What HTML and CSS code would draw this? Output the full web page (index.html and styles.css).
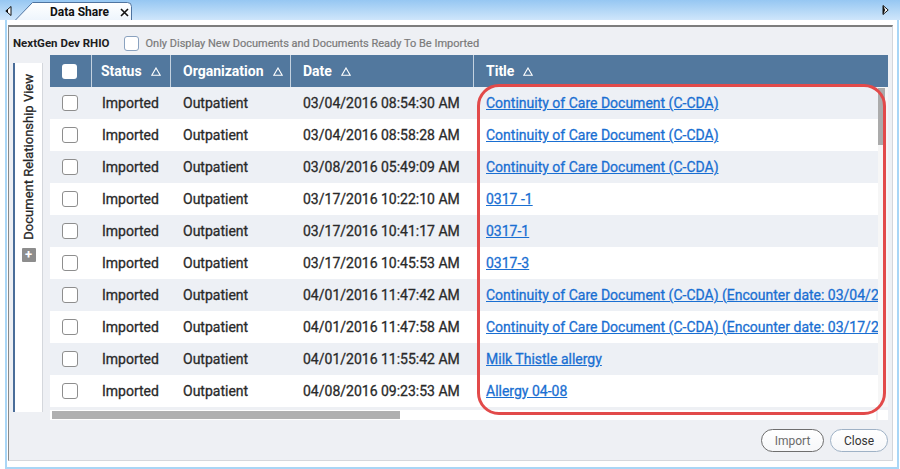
FILE: index.html
```html
<!DOCTYPE html>
<html>
<head>
<meta charset="utf-8">
<link rel="stylesheet" href="styles.css">
</head>
<body>
<div class="tabbar">
  <div class="nav nav-left">
    <svg width="7" height="10" viewBox="0 0 7 10"><polygon points="6,0.5 6,9.5 0.8,5" fill="#fff" stroke="#111" stroke-width="1"/><polygon points="3,3.2 3,6.8 0.8,5" fill="#111"/></svg>
  </div>
  <div class="tab">
    <svg class="tab-shape" width="117" height="20" viewBox="0 0 117 20">
      <defs><linearGradient id="tg" x1="0" y1="0" x2="0" y2="1"><stop offset="0" stop-color="#ffffff"/><stop offset="1" stop-color="#eef5fc"/></linearGradient></defs>
      <path d="M0.5,20 L17.5,2.5 L112.5,2.5 Q116.5,2.5 116.5,6.5 L116.5,20" fill="url(#tg)" stroke="#4f74a0" stroke-width="1"/>
    </svg>
    <span class="tab-title">Data Share</span>
    <svg class="tab-close" width="9" height="9" viewBox="0 0 9 9"><path d="M1,1 L8,8 M8,1 L1,8" stroke="#111" stroke-width="1.6"/></svg>
  </div>
  <div class="tab-fill"></div>
  <div class="nav nav-right">
    <svg width="7" height="10" viewBox="0 0 7 10"><polygon points="1,0.5 1,9.5 6.2,5" fill="#fff" stroke="#111" stroke-width="1"/><polygon points="1,0.5 1,9.5 3.2,5" fill="#111"/></svg>
  </div>
</div>

<div class="frame">
  <div class="panel">
    <div class="filter">
      <span class="source">NextGen Dev RHIO</span>
      <span class="filter-cb"></span>
      <span class="filter-label">Only Display New Documents and Documents Ready To Be Imported</span>
    </div>

    <div class="main">
      <div class="side">
        <span class="side-text">Document Relationship View</span>
        <span class="side-plus">+</span>
      </div>

      <div class="grid">
        <div class="ghead">
          <div class="hcell hcheck"><span class="hcb"></span></div>
          <div class="hcell hstatus">Status<svg class="sort" width="10" height="9" viewBox="0 0 10 9"><path d="M5,1 L9.2,8.3 L0.8,8.3 Z" fill="none" stroke="#fff" stroke-width="1.1"/></svg></div>
          <div class="hcell">Organization<svg class="sort" width="10" height="9" viewBox="0 0 10 9"><path d="M5,1 L9.2,8.3 L0.8,8.3 Z" fill="none" stroke="#fff" stroke-width="1.1"/></svg></div>
          <div class="hcell">Date<svg class="sort" width="10" height="9" viewBox="0 0 10 9"><path d="M5,1 L9.2,8.3 L0.8,8.3 Z" fill="none" stroke="#fff" stroke-width="1.1"/></svg></div>
          <div class="hcell">Title<svg class="sort" width="10" height="9" viewBox="0 0 10 9"><path d="M5,1 L9.2,8.3 L0.8,8.3 Z" fill="none" stroke="#fff" stroke-width="1.1"/></svg></div>
        </div>

        <div class="gbody">
          <div class="rows">
            <div class="row"><div class="c ccheck"><span class="cb"></span></div><div class="c cstatus">Imported</div><div class="c corg">Outpatient</div><div class="c cdate">03/04/2016 08:54:30 AM</div><div class="c ctitle"><a href="#">Continuity of Care Document (C-CDA)</a></div></div>
            <div class="row"><div class="c ccheck"><span class="cb"></span></div><div class="c cstatus">Imported</div><div class="c corg">Outpatient</div><div class="c cdate">03/04/2016 08:58:28 AM</div><div class="c ctitle"><a href="#">Continuity of Care Document (C-CDA)</a></div></div>
            <div class="row"><div class="c ccheck"><span class="cb"></span></div><div class="c cstatus">Imported</div><div class="c corg">Outpatient</div><div class="c cdate">03/08/2016 05:49:09 AM</div><div class="c ctitle"><a href="#">Continuity of Care Document (C-CDA)</a></div></div>
            <div class="row"><div class="c ccheck"><span class="cb"></span></div><div class="c cstatus">Imported</div><div class="c corg">Outpatient</div><div class="c cdate">03/17/2016 10:22:10 AM</div><div class="c ctitle"><a href="#">0317 -1</a></div></div>
            <div class="row"><div class="c ccheck"><span class="cb"></span></div><div class="c cstatus">Imported</div><div class="c corg">Outpatient</div><div class="c cdate">03/17/2016 10:41:17 AM</div><div class="c ctitle"><a href="#">0317-1</a></div></div>
            <div class="row"><div class="c ccheck"><span class="cb"></span></div><div class="c cstatus">Imported</div><div class="c corg">Outpatient</div><div class="c cdate">03/17/2016 10:45:53 AM</div><div class="c ctitle"><a href="#">0317-3</a></div></div>
            <div class="row"><div class="c ccheck"><span class="cb"></span></div><div class="c cstatus">Imported</div><div class="c corg">Outpatient</div><div class="c cdate">04/01/2016 11:47:42 AM</div><div class="c ctitle"><a href="#">Continuity of Care Document (C-CDA) (Encounter date: 03/04/2016)</a></div></div>
            <div class="row"><div class="c ccheck"><span class="cb"></span></div><div class="c cstatus">Imported</div><div class="c corg">Outpatient</div><div class="c cdate">04/01/2016 11:47:58 AM</div><div class="c ctitle"><a href="#">Continuity of Care Document (C-CDA) (Encounter date: 03/17/2016)</a></div></div>
            <div class="row"><div class="c ccheck"><span class="cb"></span></div><div class="c cstatus">Imported</div><div class="c corg">Outpatient</div><div class="c cdate">04/01/2016 11:55:42 AM</div><div class="c ctitle"><a href="#">Milk Thistle allergy</a></div></div>
            <div class="row"><div class="c ccheck"><span class="cb"></span></div><div class="c cstatus">Imported</div><div class="c corg">Outpatient</div><div class="c cdate">04/08/2016 09:23:53 AM</div><div class="c ctitle"><a href="#">Allergy 04-08</a></div></div>
          </div>
          <div class="vscroll"><div class="vthumb"></div></div>
        </div>

        <div class="hscroll">
          <div class="htrack"><div class="hthumb"></div></div>
          <div class="corner"></div>
        </div>

        <div class="annot"></div>
      </div>
    </div>

    <div class="footer">
      <button class="btn btn-import">Import</button>
      <button class="btn btn-close">Close</button>
    </div>
  </div>
</div>
</body>
</html>
```

FILE: styles.css
```css
* { box-sizing: border-box; }

html, body {
  margin: 0;
  padding: 0;
}

body {
  width: 900px;
  height: 469px;
  overflow: hidden;
  background: #ffffff;
  font-family: Roboto, "Liberation Sans", Arial, sans-serif;
  color: #333;
}

/* ---------- tab bar ---------- */
.tabbar {
  height: 20px;
  display: flex;
  align-items: stretch;
  background: linear-gradient(#96c7f2, #cfe6fb);
}

.nav {
  display: flex;
  align-items: center;
}

.nav-left {
  width: 15px;
  padding-left: 5px;
  padding-top: 1px;
}

.nav-right {
  width: 20px;
  padding-left: 2px;
}

.tab {
  position: relative;
  width: 117px;
  display: flex;
  align-items: center;
  padding-top: 3px;
}

.tab-shape {
  position: absolute;
  left: 0;
  top: 0;
}

.tab-title {
  position: relative;
  margin-left: 35px;
  font-size: 12px;
  font-weight: 700;
  color: #111;
}

.tab-close {
  position: relative;
  margin-left: 11px;
  margin-top: 2px;
}

.tab-fill {
  flex: 1;
}

/* ---------- frame ---------- */
.frame {
  margin-left: 5px;
  width: 894px;
  height: 449px;
  border: 2px solid #a9d6f6;
  border-top: none;
  padding: 5px 4px 6px 1px;
}

.panel {
  height: 436px;
  width: 885px;
  background: #eef0f4;
  border-top: 2px solid #7d7d7d;
  border-left: 1px solid #8b8b8b;
  border-right: 1px solid #d3d6db;
  border-bottom: 1px solid #d6d8dc;
  display: flex;
  flex-direction: column;
}

/* ---------- filter row ---------- */
.filter {
  height: 24px;
  margin-top: 4px;
  padding-left: 4px;
  display: flex;
  align-items: center;
}

.source {
  font-size: 11.5px;
  font-weight: 700;
  color: #1e1e1e;
}

.filter-cb {
  width: 15px;
  height: 15px;
  margin-left: 14px;
  border: 1px solid #8aa2bf;
  border-radius: 3px;
  background: #fff;
}

.filter-label {
  margin-left: 7px;
  font-size: 11px;
  font-weight: 400;
  -webkit-text-stroke: 0.2px #7a7a7a;
  color: #7a7a7a;
}

/* ---------- main ---------- */
.main {
  height: 365px;
  display: flex;
  padding-left: 4px;
}

.side {
  margin-top: 8px;
  width: 29px;
  height: 349px;
  background: #fff;
  border-left: 2px solid #4a6d99;
  box-shadow: 1px 0 0 #d4d7dc;
  display: flex;
  flex-direction: column;
  align-items: center;
  padding-top: 11px;
}

.side-text {
  writing-mode: vertical-rl;
  transform: rotate(180deg);
  font-size: 13px;
  font-weight: 400;
  -webkit-text-stroke: 0.3px #262626;
  color: #262626;
  white-space: nowrap;
}

.side-plus {
  margin-top: 8px;
  width: 14px;
  height: 14px;
  background: #8d8d8d;
  color: #fff;
  font-size: 13px;
  font-weight: 700;
  line-height: 14px;
  text-align: center;
  border-radius: 1px;
}

/* ---------- grid ---------- */
.grid {
  position: relative;
  margin-left: 8px;
  width: 838px;
}

.ghead {
  height: 32px;
  background: #52789e;
  display: grid;
  grid-template-columns: 41px 79px 120px 183px 415px;
}

.hcell {
  display: flex;
  align-items: center;
  border-left: 1px solid #c4d2e0;
  padding-left: 12px;
  color: #fff;
  font-size: 14px;
  font-weight: 700;
  white-space: nowrap;
}

.hcell.hcheck {
  border-left: none;
  padding-left: 12px;
}

.hcell.hstatus {
  padding-left: 9px;
}

.sort {
  margin-left: 9px;
  margin-top: 1px;
}

.hcb {
  width: 15px;
  height: 15px;
  background: #fff;
  border-radius: 3px;
}

.gbody {
  height: 320px;
  display: flex;
}

.rows {
  width: 828px;
  overflow: hidden;
}

.row {
  height: 32px;
  display: grid;
  grid-template-columns: 41px 79px 120px 183px 405px;
  background: #edf0f5;
}

.row:nth-child(even) {
  background: #ffffff;
}

.c {
  display: flex;
  align-items: center;
  font-size: 14px;
  font-weight: 400;
  -webkit-text-stroke: 0.3px #2a2a2a;
  color: #2a2a2a;
  white-space: nowrap;
  overflow: hidden;
}

.ccheck { padding-left: 12px; }
.cstatus { padding-left: 11px; }
.corg { padding-left: 13px; }
.cdate { padding-left: 13px; }
.ctitle { padding-left: 13px; -webkit-text-stroke: 0.3px #1a6fd2; }

.ctitle a {
  color: #1a6fd2;
  text-decoration: underline;
}

.cb {
  width: 16px;
  height: 16px;
  border: 1px solid #8e8e8e;
  border-radius: 3px;
  background: #fff;
}

.vscroll {
  width: 10px;
  background: #f6f6f6;
  padding-top: 1px;
}

.vthumb {
  width: 7px;
  height: 57px;
  background: #ababab;
}

.hscroll {
  height: 14px;
  display: flex;
  align-items: flex-start;
  padding-top: 3px;
}

.htrack {
  width: 826px;
  height: 10px;
  background: #fff;
  padding: 1px 0 0 2px;
}

.hthumb {
  width: 348px;
  height: 8px;
  background: #b0b0b0;
}

.corner {
  margin-left: 2px;
  width: 10px;
  height: 10px;
  background: #fff;
}

.annot {
  position: absolute;
  left: 427px;
  top: 29px;
  width: 409px;
  height: 331px;
  border: 3px solid #e24a4a;
  border-radius: 22px;
  pointer-events: none;
}

/* ---------- footer ---------- */
.footer {
  display: flex;
  justify-content: flex-end;
  gap: 6px;
  padding-top: 9px;
  padding-right: 4px;
}

.btn {
  height: 23px;
  border-radius: 12px;
  font-family: Roboto, "Liberation Sans", Arial, sans-serif;
  font-size: 12px;
  font-weight: 400;
  padding: 0;
  background: linear-gradient(#ffffff, #f6f7f9);
}

.btn-import {
  width: 63px;
  border: 1px solid #6e6e6e;
  color: #6a6a6a;
}

.btn-close {
  width: 58px;
  border: 1px solid #9fb2c6;
  color: #333;
}
```
